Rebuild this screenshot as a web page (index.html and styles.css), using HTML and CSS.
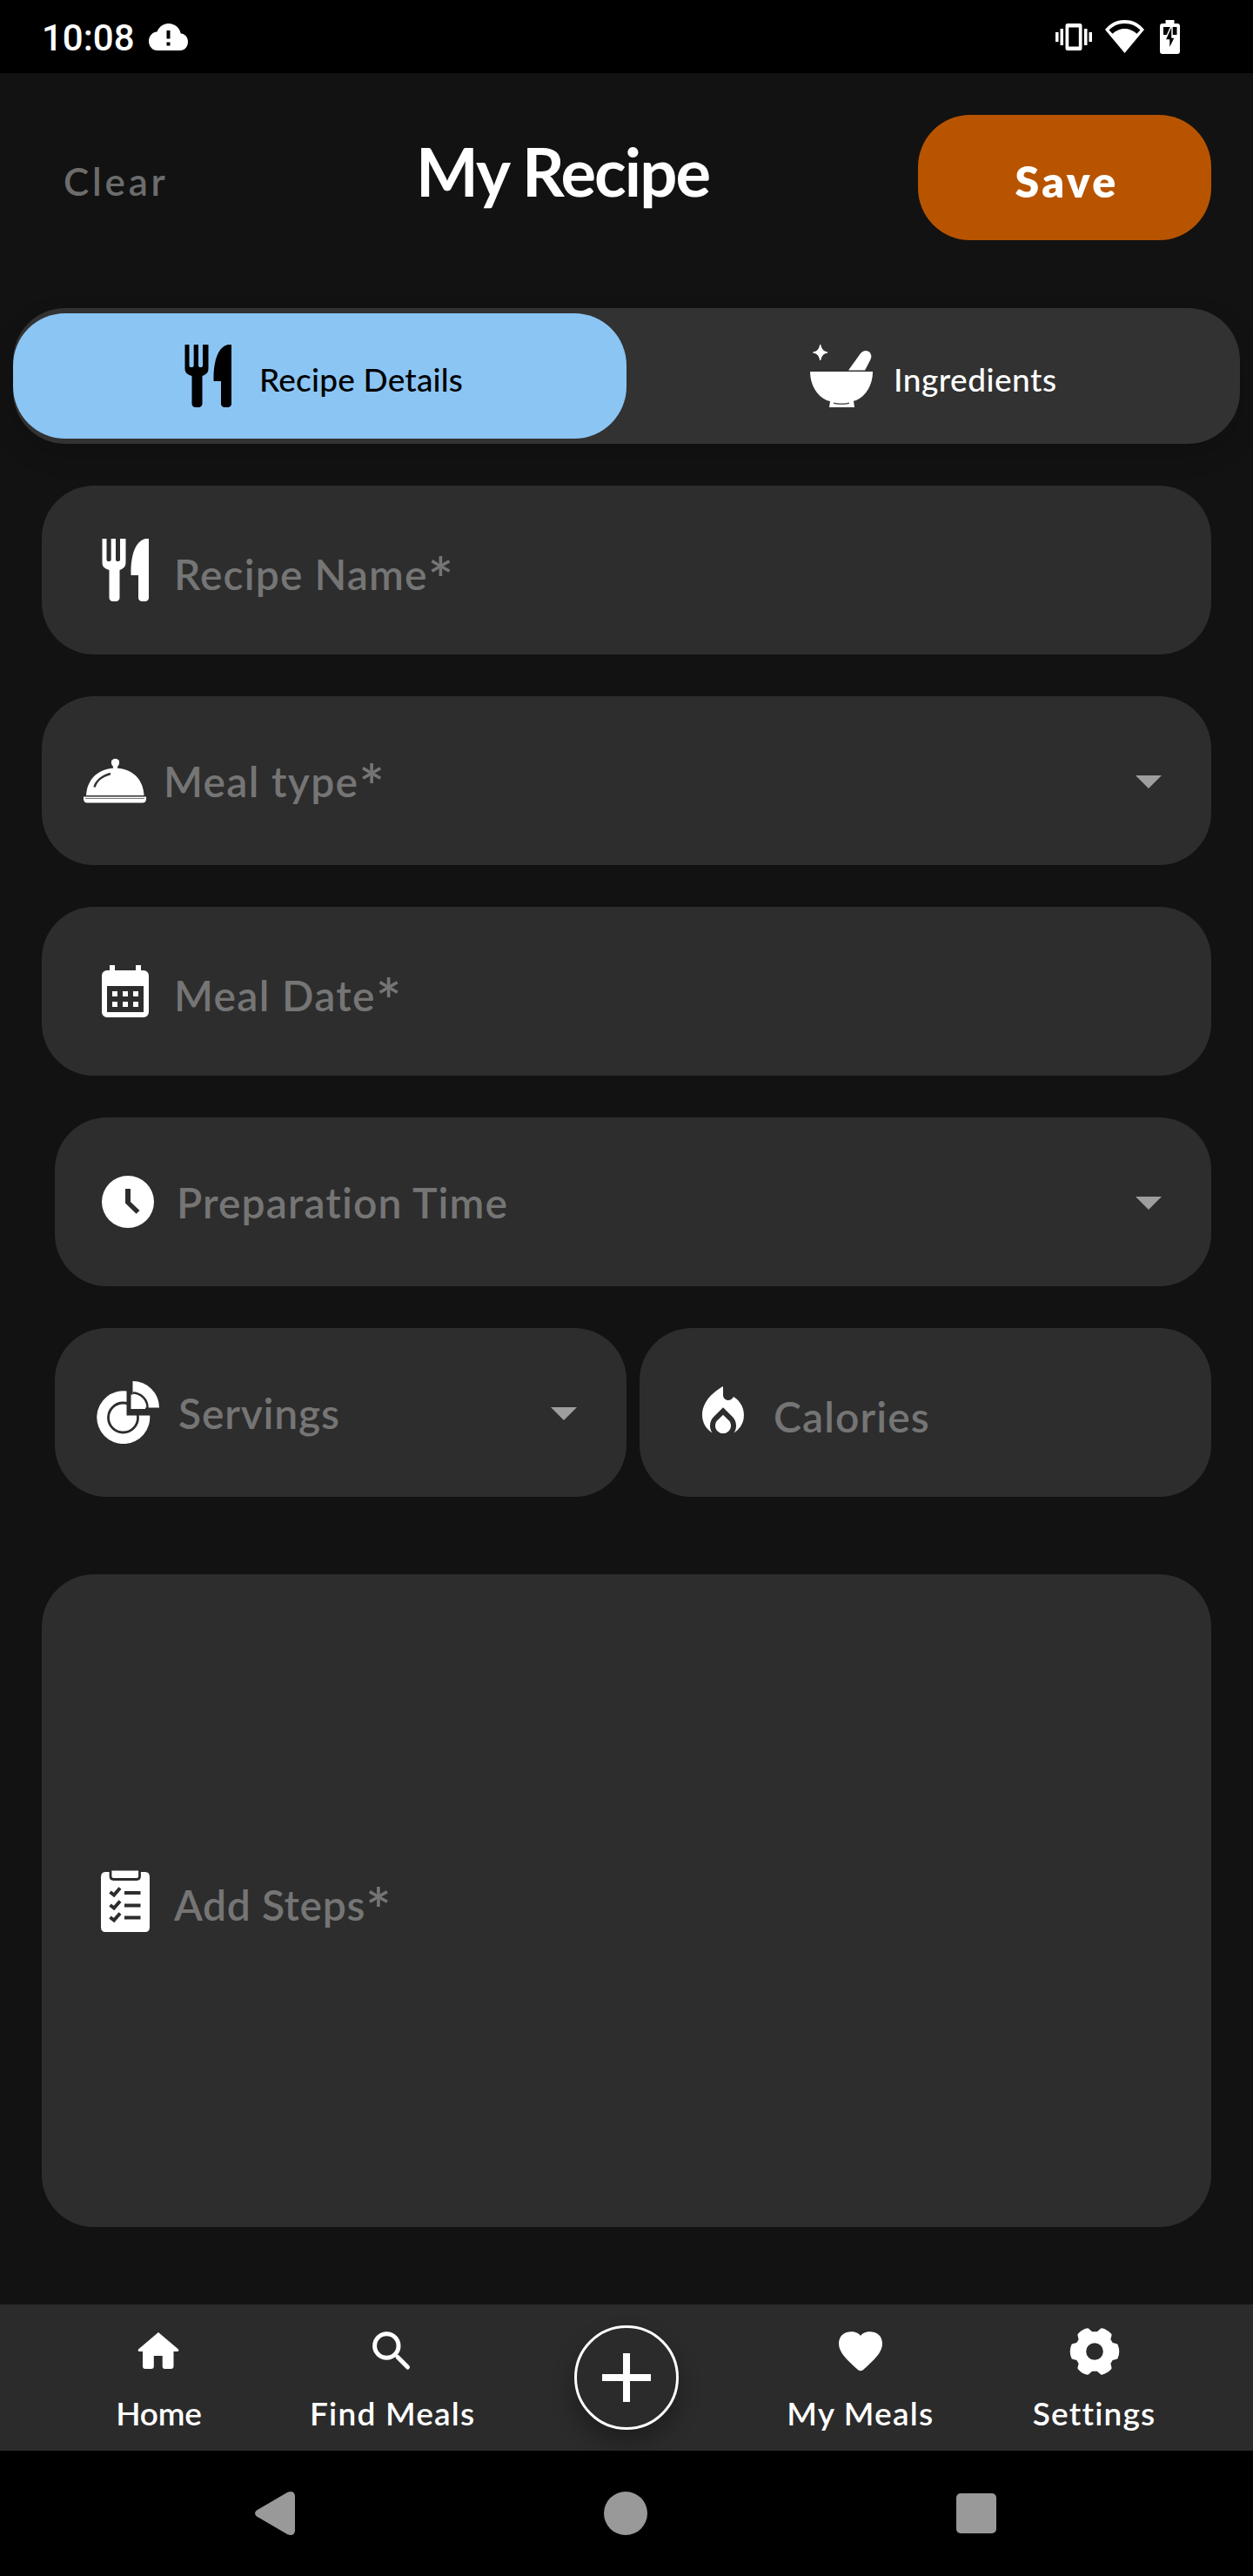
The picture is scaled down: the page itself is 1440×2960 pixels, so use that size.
FILE: index.html
```html
<!DOCTYPE html>
<html lang="en">
<head>
<meta charset="utf-8">
<title>My Recipe</title>
<link rel="stylesheet" href="styles.css">
</head>
<body>
<svg class="defs" aria-hidden="true">
  <symbol id="cutlery" viewBox="0 0 72 72">
    <path d="M9.500 0h5v24c0 1.500 1 2 2.500 2s2.700-.5 2.700-2V0h5.300v24c0 1.500 1 2 2.500 2s2.500-.5 2.500-2V0h6.500v27c0 5-2 7-7 9V68c0 6-12 6-12 0V36c-6-2-8-4-8-9z"/>
    <path d="M63 0v68c0 6-12 6-12 0V42h-8.500C42 20 47 3 59 0z"/>
  </symbol>
  <symbol id="caret" viewBox="0 0 30 15"><path d="M0 0h30L15 15z"/></symbol>
</svg>

<div class="screen">
  <header class="status">
    <span class="time">10:08</span>
    <svg class="cloud" width="45" height="31" viewBox="0 0 45 31" fill="#fff"><path fill-rule="evenodd" d="M10 31C4 31 0 26 0 20.500 0 14.500 4 10 9.500 9.500 12 3.500 17 0 22.500 0c7.500 0 13 5 14.300 11.500C42 12 45 16 45 21c0 6-4 10-9 10zM20.500 8v9.500h4V8zm0 13.500v4h4v-4z"/></svg>
    <div class="status-icons">
      <svg width="42" height="31" viewBox="0 0 42 31" fill="#fff"><path fill-rule="evenodd" d="M0 10h3.500v11H0zM5.500 6H9v19H5.500zM33 6h3.500v19H33zM38.500 10H42v11h-3.500zM14 0h14q2.500 0 2.500 2.500v26Q30.500 31 28 31H14q-2.500 0-2.500-2.500v-26Q11.500 0 14 0zm1.200 4.500v22h11.600v-22z"/></svg>
      <svg class="wifi" width="45" height="38" viewBox="0 0 45 38" fill="#fff"><path fill-rule="evenodd" d="M22.500 0C33 0 39.500 4.500 45 11L22.500 38 0 11C5.500 4.500 12 0 22.500 0zm0 4C14.500 4 9 7 4.500 11.500l4 4.300C17 8.200 28 8.200 36.500 15.800l4-4.300C36 7 30.500 4 22.500 4z"/></svg>
      <svg class="battery" width="23" height="39" viewBox="0 0 23 39"><path fill="#fff" d="M6.500 0h10v4H20q3 0 3 3v29q0 3-3 3H3q-3 0-3-3V7q0-3 3-3h3.500z"/><path d="M4 8h15.500v9H4z"/><path d="M13.500 6 6 23h4.500v11L17.500 20H14V6z" stroke="#fff" stroke-width="1.500"/></svg>
    </div>
  </header>

  <div class="toolbar">
    <a class="clear">Clear</a>
    <h1 class="title">My Recipe</h1>
    <button class="save"><span>Save</span></button>
  </div>

  <div class="tabs">
    <div class="tab active">
      <svg class="icon" fill="#000"><use href="#cutlery"/></svg>
      <span class="tab-label">Recipe Details</span>
    </div>
    <div class="tab second">
      <svg class="icon" viewBox="0 0 72 72" fill="#fff">
        <path d="M11.700 0c1.300 5.500 3.300 7.800 8.300 9-5 1.200-7 3.500-8.300 9C10.400 12.500 8.500 10.200 3.500 9c5-1.200 6.900-3.500 8.200-9z" stroke="#fff"/>
        <path d="M44 29.500 58 10c6-7 15-1 11.500 7L63 29.500z"/>
        <path d="M0 31h72c0 15.500-8 28-19 33-9 3-25 3-34 0C8 59 0 46.500 0 31z"/>
        <path d="M23 65h27l1 7H22z"/>
        <path d="M27 67.300q9 2 18 0" fill="none" stroke="#555" stroke-width="1.500"/>
      </svg>
      <span class="tab-label">Ingredients</span>
    </div>
  </div>

  <main class="form">
    <div class="field input">
      <svg class="icon" fill="#fff"><use href="#cutlery"/></svg>
      <span class="label name">Recipe Name<span class="req">*</span></span>
    </div>

    <div class="field select">
      <svg class="icon" viewBox="0 0 72 72" fill="#fff">
        <path d="M32 13q4.500-4.500 9 0v4l-2 3v3h-5v-3l-2-3z"/>
        <path d="M3 53C4 34 17 22 36.500 21.500 56 22 68.500 34 69.500 53z"/>
        <path d="M0 54.500h72V58q-1 3.500-4 3.500H4q-3 0-4-3.500z"/>
        <path d="M2 56.500h68" stroke="#777" stroke-width="1"/>
        <path d="M12.500 43.500C15 35 21 31 31 28" fill="none" stroke="#333" stroke-width="2.500"/>
      </svg>
      <span class="label type">Meal type<span class="req">*</span></span>
      <svg class="caret"><use href="#caret"/></svg>
    </div>

    <div class="field input">
      <svg class="icon" viewBox="0 0 24 24" fill="#fff"><path fill-rule="evenodd" d="M6 2h2v2h8V2h2v2h1a2 2 0 0 1 2 2v14a2 2 0 0 1-2 2H5a2 2 0 0 1-2-2V6a2 2 0 0 1 2-2h1zM5 10v10h14V10zM7 12h2v2H7zm4 0h2v2h-2zm4 0h2v2h-2zM7 16h2v2H7zm4 0h2v2h-2zm4 0h2v2h-2z"/></svg>
      <span class="label type">Meal Date<span class="req">*</span></span>
    </div>

    <div class="field select inset">
      <svg class="icon" viewBox="0 0 24 24" fill="#fff"><path fill-rule="evenodd" d="M12 2a10 10 0 1 0 0 20 10 10 0 0 0 0-20zM11 7h2v5l3.500 3.300-1.300 1.300L11 12.500z"/></svg>
      <span class="label">Preparation Time</span>
      <svg class="caret"><use href="#caret"/></svg>
    </div>

    <div class="pair">
      <div class="field select">
        <svg class="icon" viewBox="0 0 72 72">
          <path d="M35.500 11.500A30.500 30.500 0 1 0 61 37.500H37z" fill="#fff"/>
          <circle cx="30.500" cy="42" r="17" fill="none" stroke="#2d2d2d" stroke-width="2.800"/>
          <path d="M36 10v28h27" fill="none" stroke="#2d2d2d" stroke-width="3"/>
          <path d="M38 0h34v34H38z" fill="#2d2d2d"/>
          <path d="M41.500 0A30.500 30.500 0 0 1 72 30.500H41.500z" fill="#fff"/>
          <path d="M39.500 15.500A16 16 0 0 1 56 32H39.500z" fill="#fff"/>
          <path d="M41.500 13.500A17 17 0 0 1 58.500 31" fill="none" stroke="#2d2d2d" stroke-width="2.500"/>
        </svg>
        <span class="label servings">Servings</span>
        <svg class="caret"><use href="#caret"/></svg>
      </div>
      <div class="field input">
        <svg class="icon" viewBox="0 0 24 24" fill="#fff"><path d="M12 12.900l-2.130 2.090C9.310 15.550 9 16.280 9 17.060 9 18.680 10.350 20 12 20s3-1.320 3-2.940c0-.78-.31-1.520-.87-2.070z"/><path d="M16 6l-.44.55C14.380 8.020 12 7.190 12 5.300V2S4 6 4 13c0 2.920 1.560 5.470 3.890 6.860C7.330 19.070 7 18.100 7 17.060c0-1.320.52-2.560 1.470-3.500L12 10.100l3.530 3.470c.95.93 1.470 2.170 1.470 3.500 0 1.020-.31 1.960-.85 2.750 1.890-1.150 3.290-3.060 3.710-5.300.66-3.550-1.070-6.900-3.860-8.520z"/></svg>
        <span class="label calories">Calories</span>
      </div>
    </div>

    <div class="field input steps">
      <svg class="icon" viewBox="0 0 72 72">
        <path d="M13 3h46q5 0 5 6v57q0 6-5 6H13q-5 0-5-6V9q0-6 5-6z" fill="#fff"/>
        <path d="M19 0v8q0 3.500 3.500 3.500H49q3.500 0 3.500-3.500V0z" fill="#fff" stroke="#2d2d2d" stroke-width="2.800"/>
        <g fill="none" stroke="#2d2d2d" stroke-width="4"><path d="m18.500 26 4.500 3.500 7-8M18.500 41l4.500 3.500 7-8M18.500 55l4.500 3.500 7-8M35 27h18.500M35 41.500h18.500M35 55.500h18.500"/></g>
      </svg>
      <span class="label steps-label">Add Steps<span class="req">*</span></span>
    </div>
  </main>

  <nav class="bottom-nav">
    <div class="nav-item home">
      <svg width="60" height="60" viewBox="0 0 60 60" fill="#fff"><path d="m30 9 23 19.500q1 2-1 2.500h-4.500v17q0 3-3 3h-7q-2.800 0-2.800-3V36h-9.900v12q0 3-2.800 3h-7q-3 0-3-3V31H8q-2-.5-1-2.500z"/></svg>
      <span>Home</span>
    </div>
    <div class="nav-item">
      <svg width="60" height="60" viewBox="0 0 60 60" fill="none" stroke="#fff" stroke-width="5"><circle cx="23.300" cy="24.500" r="13.700"/><path d="m36 37.500 11.500 11.500" stroke-linecap="round"/></svg>
      <span>Find Meals</span>
    </div>
    <button class="fab" aria-label="Add">
      <svg width="56" height="56" viewBox="0 0 56 56" fill="#fff"><path d="M24 0h8v24h24v8H32v24h-8V32H0v-8h24z"/></svg>
    </button>
    <div class="nav-item">
      <svg width="60" height="60" viewBox="0 0 60 60" fill="#fff"><path d="M30 13C34.500 5.500 55 5.500 55 22c0 10-9 18.500-22.500 30.500q-2.500 1.500-5 0C14 40.500 5 32 5 22 5 5.500 25.500 5.500 30 13z"/></svg>
      <span>My Meals</span>
    </div>
    <div class="nav-item">
      <svg width="60" height="60" viewBox="-30 -31 60 60"><path d="M25-7Q28 0 25 7L19.500 8.500 16.500 13.500 17.800 19Q13.500 24 8 25L3.500 21H-3.500L-8 25Q-13.500 24-17.800 19L-16.500 13.500-19.500 8.500-25 7Q-28 0-25-7L-19.500-8.500-16.500-13.500-17.800-19Q-13.500-24-8-25L-3.500-21H3.500L8-25Q13.500-24 17.800-19L16.500-13.500 19.500-8.500z" fill="#fff" stroke="#fff" stroke-width="3.500" stroke-linejoin="round"/><circle r="9.800" fill="#2b2b2b"/></svg>
      <span>Settings</span>
    </div>
  </nav>

  <footer class="system-nav">
    <svg width="60" height="60" viewBox="0 0 60 60" fill="#999"><path d="M9 26.500 44.500 5.800Q52 3 53 10v40q-1 7-8.500 4.200L9 33.500q-4-3.500 0-7z"/></svg>
    <svg width="60" height="60" viewBox="0 0 60 60" fill="#999"><circle cx="30" cy="30" r="25"/></svg>
    <svg width="60" height="60" viewBox="0 0 60 60" fill="#999"><rect x="7" y="7" width="46" height="46" rx="5"/></svg>
  </footer>
</div>
</body>
</html>
```
FILE: styles.css
```css
* {
  box-sizing: border-box;
}

body {
  margin: 0;
  background: #121212;
  color: #fff;
  font-family: Lato, "Open Sans", sans-serif;
  font-weight: 500;
}

svg {
  display: block;
  flex: none;
}

button {
  border: 0;
  padding: 0;
  color: inherit;
  font: inherit;
}

.defs {
  display: none;
}

.screen {
  width: 1440px;
  height: 2960px;
  display: flex;
  flex-direction: column;
}

/* Status bar */
.status {
  height: 84px;
  padding: 0 84px 0 48px;
  display: flex;
  align-items: center;
  background: #000;
}

.time {
  padding-top: 4px;
  font: 500 42px/48px Roboto, sans-serif;
}

.cloud {
  margin-left: 16px;
}

.status-icons {
  margin-left: auto;
  display: flex;
  align-items: center;
}

.wifi {
  margin: 0 18px 0 15px;
}

/* Title bar */
.toolbar {
  height: 270px;
  padding: 48px 48px 0 73px;
  display: flex;
  align-items: flex-start;
}

.clear {
  width: 405px;
  line-height: 152px;
  font-size: 44px;
  font-weight: 600;
  letter-spacing: 3.8px;
  color: #6c6c6c;
}

.title {
  margin: 0;
  font-size: 76px;
  font-weight: 700;
  line-height: 130px;
  letter-spacing: -1.9px;
}

.save {
  width: 337px;
  height: 144px;
  margin-left: auto;
  border-radius: 60px;
  background: #b85400;
  font-size: 50px;
  font-weight: 800;
  letter-spacing: 3.4px;
}

.save span {
  display: block;
  padding: 8px 0 0 5px;
  line-height: 136px;
}

/* Tabs */
.tabs {
  height: 156px;
  margin: 0 15px;
  padding: 6px 0;
  display: flex;
  border-radius: 60px;
  background: #323232;
  box-shadow: 0 12px 30px rgba(0, 0, 0, .16);
}

.tab {
  width: 705px;
  padding-left: 188px;
  display: flex;
  align-items: center;
}

.tab.active {
  border-radius: 60px;
  background: #8bc5f4;
  color: #000;
}

.tab.second {
  padding-left: 211px;
}

.tab-label {
  margin: 7px 0 0 23px;
  font-size: 37px;
  line-height: 44px;
  letter-spacing: .2px;
}

.second .tab-label {
  margin-left: 24px;
  letter-spacing: .5px;
}

.icon {
  width: 72px;
  height: 72px;
}

/* Form */
.form {
  padding: 48px;
  display: flex;
  flex-direction: column;
  gap: 48px;
}

.field {
  height: 194px;
  padding: 0 57px 0 60px;
  display: flex;
  align-items: center;
  gap: 20px;
  border-radius: 60px;
  background: #2d2d2d;
}

.select {
  padding-left: 48px;
}

.inset {
  margin-left: 15px;
}

.label {
  margin-top: 2px;
  font-size: 48px;
  font-weight: 600;
  line-height: 58px;
  letter-spacing: 1.1px;
  color: #757575;
  white-space: nowrap;
}

.input .label {
  margin-top: 9px;
}

.label.type {
  letter-spacing: 1.3px;
}

.label.steps-label {
  letter-spacing: .6px;
}

.label.servings {
  margin-left: 2px;
  letter-spacing: .8px;
}

.label.calories {
  margin-left: 2px;
}

.req {
  font-size: 70px;
  line-height: 0;
  vertical-align: -13px;
}

.caret {
  width: 30px;
  height: 15px;
  margin: 3px 0 0 auto;
  fill: #9e9e9e;
}

.pair {
  margin-left: 15px;
  display: grid;
  grid-template-columns: 1fr 1fr;
  gap: 15px;
}

.steps {
  height: 750px;
  margin-top: 41px;
}

/* Bottom navigation */
.bottom-nav {
  height: 168px;
  margin-top: 41px;
  padding: 0 48px;
  display: grid;
  grid-template-columns: repeat(5, 1fr);
  justify-items: center;
  overflow: hidden;
  background: #2b2b2b;
}

.nav-item {
  padding-top: 23px;
  display: flex;
  flex-direction: column;
  align-items: center;
  gap: 20px;
  font-size: 37px;
  font-weight: 600;
  line-height: 44px;
  letter-spacing: 1.2px;
  white-space: nowrap;
}

.nav-item.home {
  letter-spacing: -.2px;
}

.fab {
  width: 120px;
  height: 120px;
  margin-top: 24px;
  display: flex;
  align-items: center;
  justify-content: center;
  border: 3px solid #fff;
  border-radius: 50%;
  background: #2b2b2b;
  box-shadow: 0 14px 26px rgba(0, 0, 0, .3);
}

/* System navigation */
.system-nav {
  height: 144px;
  padding: 0 288px 0 286px;
  display: flex;
  align-items: center;
  justify-content: space-between;
  background: #000;
}
```
